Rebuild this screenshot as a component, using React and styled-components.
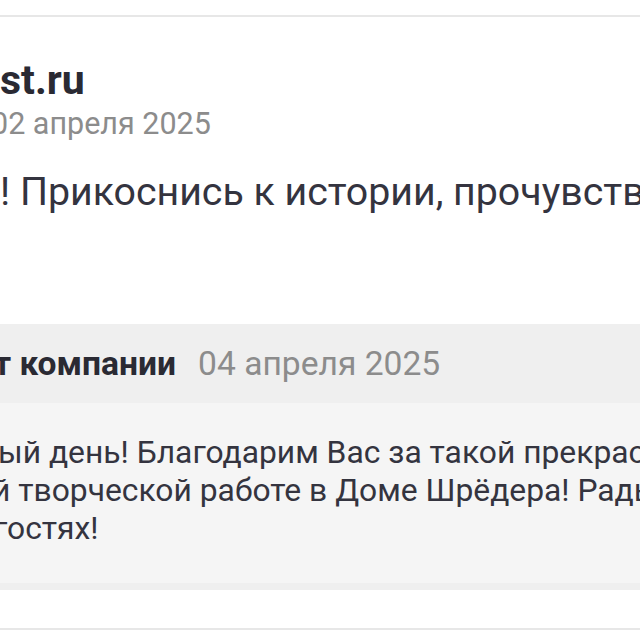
import React from "react";
import styled, { createGlobalStyle } from "styled-components";

const Global = createGlobalStyle`
  html, body { margin: 0; padding: 0; background: #ffffff; }
  body { font-family: Roboto, "Liberation Sans", Arial, sans-serif; }
`;

const Page = styled.div`
  width: 640px;
  height: 640px;
  overflow: hidden;
  background: #ffffff;
  display: flex;
  flex-direction: column;
`;

const Rule = styled.div`
  flex: none;
  height: 2px;
  background: #e7e7e7;
  margin-top: ${(p) => p.$top}px;
`;

const Review = styled.section`
  display: flex;
  flex-direction: column;
  padding-top: 41px;
`;

const Line = styled.div`
  white-space: nowrap;
  overflow: hidden;
  height: 44px;
  line-height: 44px;
  margin-left: ${(p) => p.$shift || 0}px;
`;

const AuthorName = styled(Line)`
  font-size: 41px;
  font-weight: 700;
  color: #2a2a33;
`;

const DateText = styled(Line)`
  font-size: 30.5px;
  color: #8c8c8c;
`;

const ReviewText = styled(Line)`
  margin-top: 24px;
  font-size: 39.3px;
  color: #34343f;
`;

const Response = styled.section`
  margin-top: 110px;
  display: flex;
  flex-direction: column;
`;

const ResponseHeader = styled.div`
  height: 79px;
  background: #efefef;
  display: flex;
  align-items: center;
  gap: 22px;
  white-space: nowrap;
  font-size: 33.6px;
`;

const ResponseTitle = styled.span`
  font-weight: 700;
  color: #2a2a33;
  margin-left: -6px;
`;

const ResponseDate = styled.span`
  color: #8c8c8c;
`;

const ResponseBody = styled.div`
  background: #f5f5f5;
  padding: 30px 0 36px 0;
  border-bottom: 7px solid #efefef;
  font-size: 31.8px;
  line-height: 38px;
  color: #34343f;
`;

const BodyLine = styled.div`
  white-space: nowrap;
  margin-left: ${(p) => p.$shift || 0}px;
`;

export default function App() {
  return (
    <Page>
      <Global />
      <Rule $top={15} />
      <Review>
        <AuthorName>st.ru</AuthorName>
        <DateText $shift={-9}>02 апреля 2025</DateText>
        <ReviewText>! Прикоснись к истории, прочувствовать</ReviewText>
      </Review>
      <Response>
        <ResponseHeader>
          <ResponseTitle>т компании</ResponseTitle>
          <ResponseDate>04 апреля 2025</ResponseDate>
        </ResponseHeader>
        <ResponseBody>
          <BodyLine $shift={-2}>ый день! Благодарим Вас за такой прекрасный отзыв</BodyLine>
          <BodyLine $shift={-8}>й творческой работе в Доме Шрёдера! Рады видеть</BodyLine>
          <BodyLine $shift={-6}>гостях!</BodyLine>
        </ResponseBody>
      </Response>
      <Rule $top={38} />
    </Page>
  );
}
